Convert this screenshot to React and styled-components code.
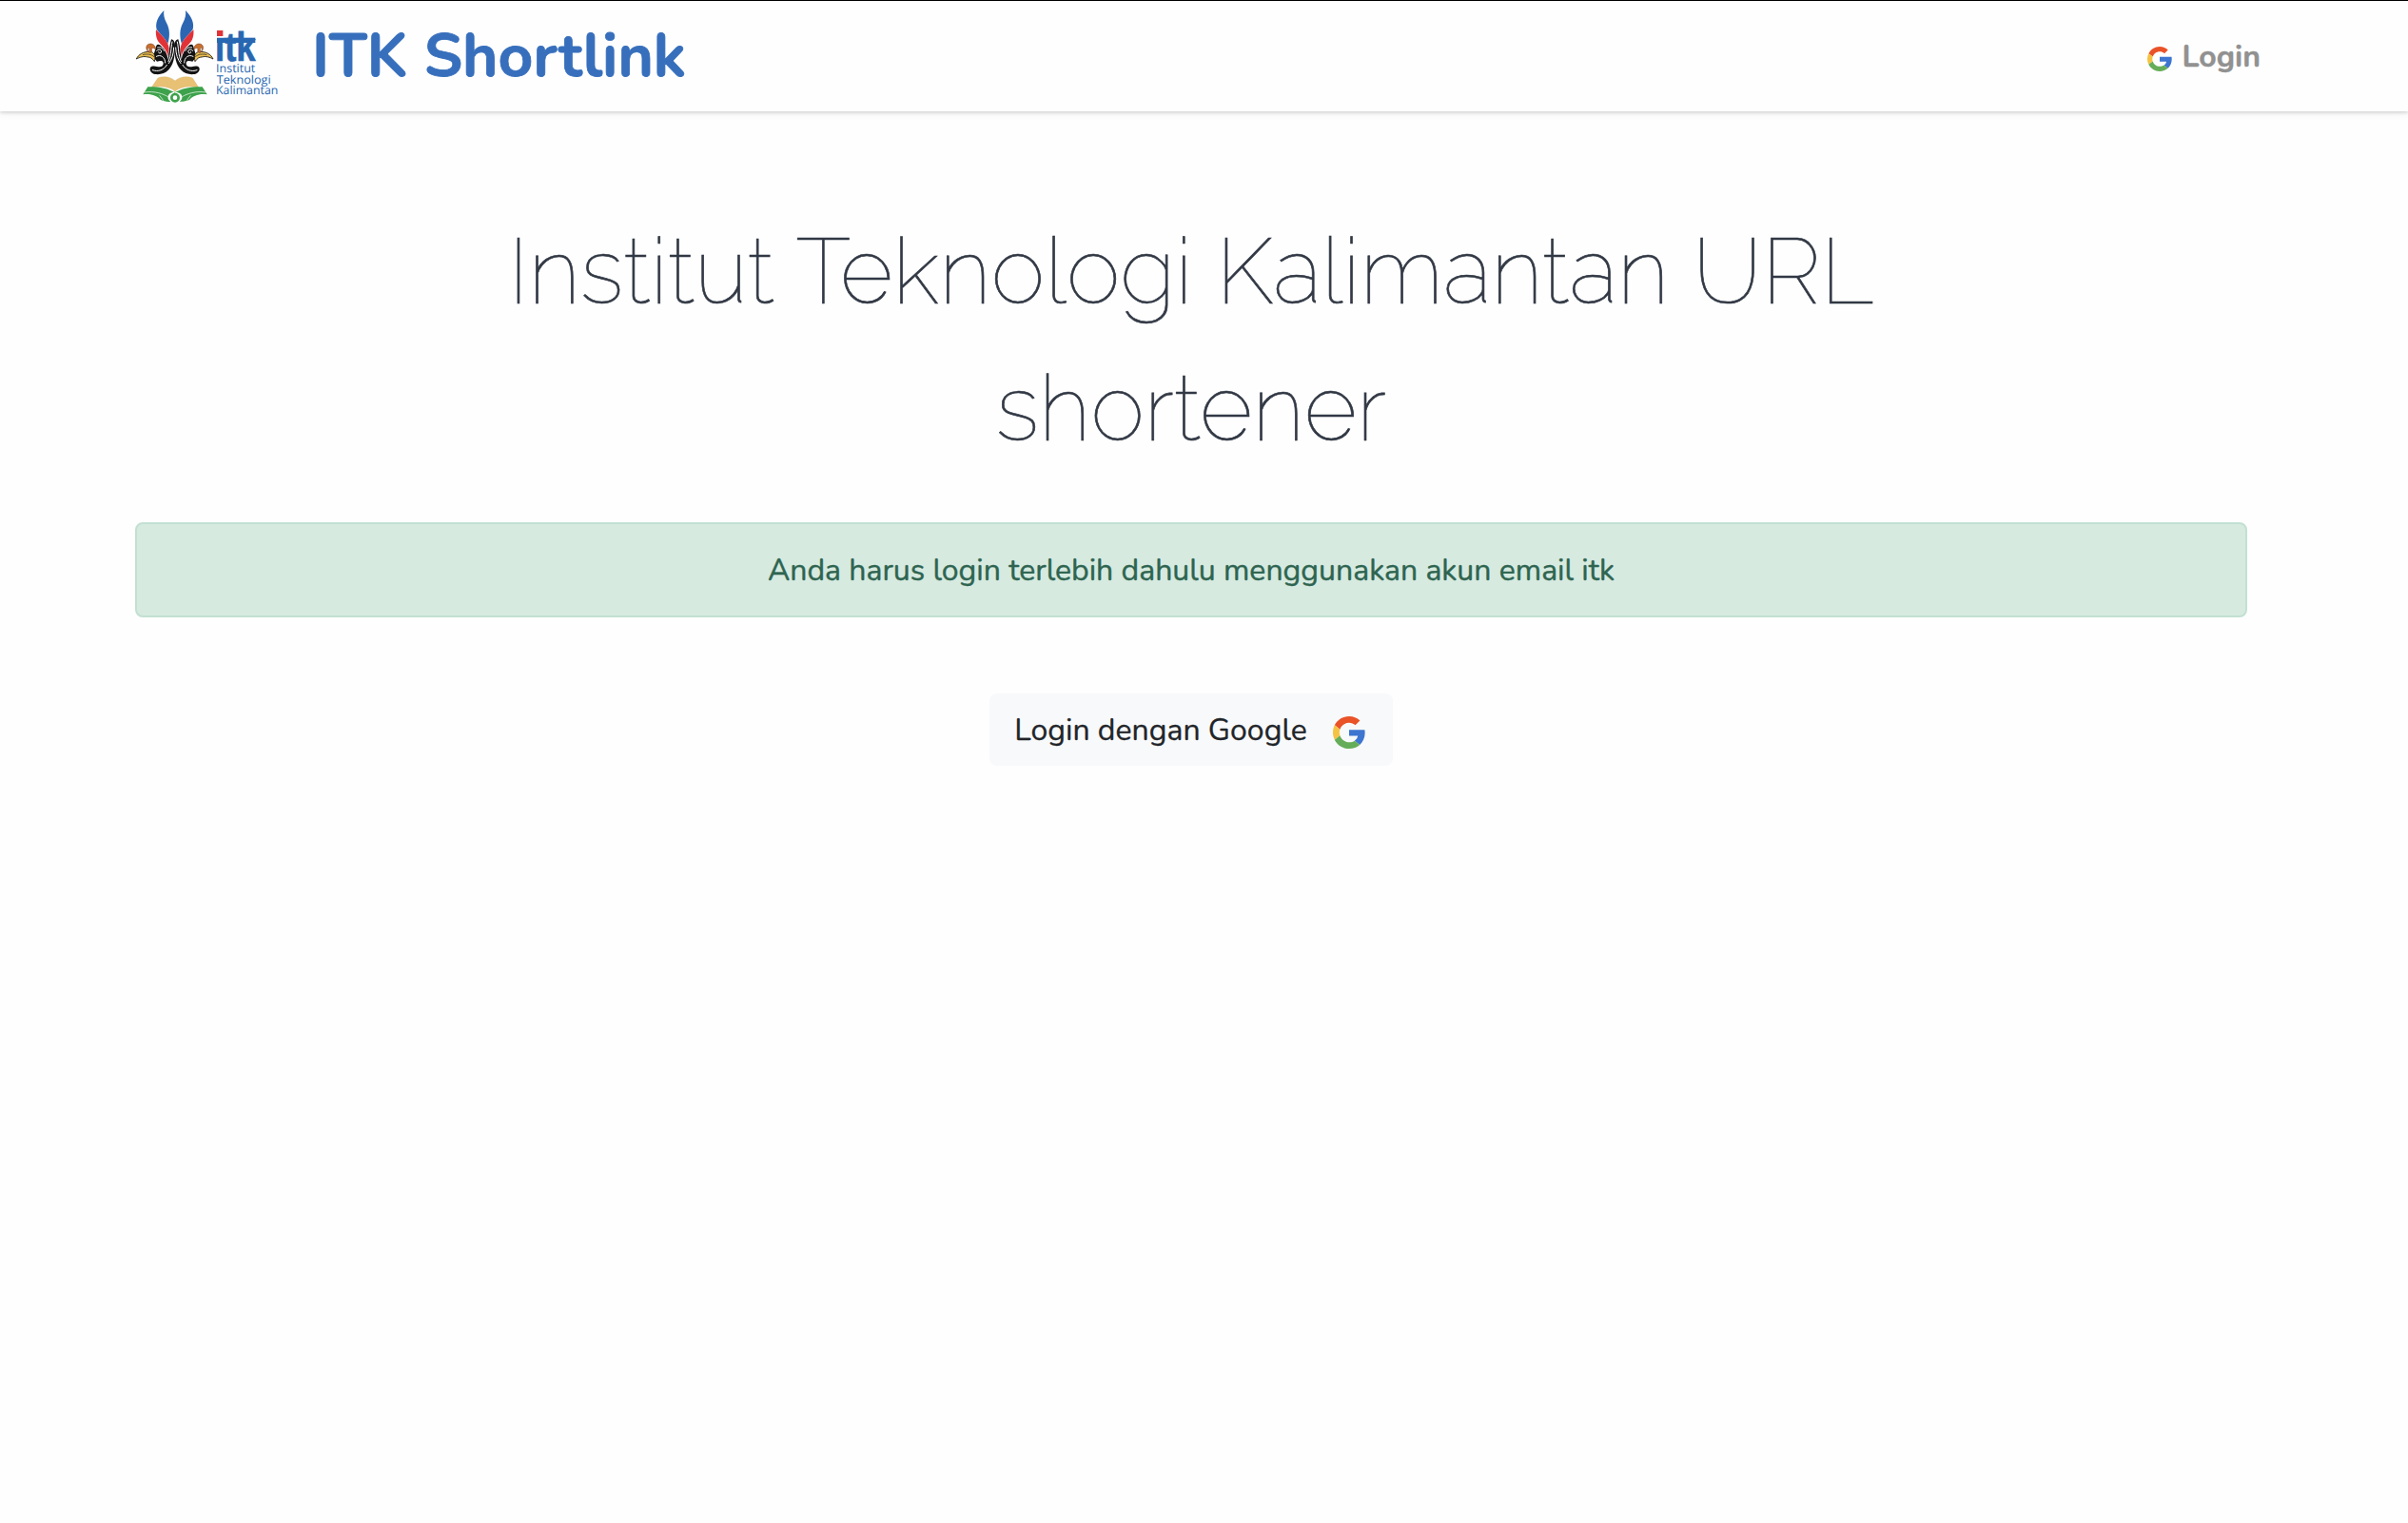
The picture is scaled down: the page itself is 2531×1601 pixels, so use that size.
import React from 'react';
import styled, { createGlobalStyle } from 'styled-components';

const GlobalStyle = createGlobalStyle`
  * { box-sizing: border-box; }
  body {
    margin: 0;
    background: #fefefe;
    color: #212529;
    font-family: Nunito, "Open Sans", sans-serif;
    font-size: 32px;
    line-height: 48px;
  }
`;

const Page = styled.div`
  min-height: 1601px;
  border-top: 1px solid #000;
`;

const Navbar = styled.nav`
  display: flex;
  align-items: center;
  height: 116px;
  padding: 0 155px 0 142px;
  background: #fefefe;
  box-shadow: 0 4px 8px rgba(0, 0, 0, 0.04), 0 2px 3px rgba(0, 0, 0, 0.12);
`;

const Brand = styled.a`
  display: flex;
  align-items: center;
  gap: 35px;
  color: #376fbc;
  font-size: 64px;
  font-weight: 700;
  line-height: 96px;
  white-space: nowrap;
  -webkit-text-stroke: 0.8px #376fbc;
`;

const BrandMark = styled.svg`
  display: block;
  width: 151px;
  height: 116px;
  text-rendering: geometricPrecision;
  -webkit-text-stroke: 0;
`;

const LoginLink = styled.a`
  display: flex;
  align-items: center;
  gap: 11px;
  margin-left: auto;
  padding-top: 1px;
  color: #919191;
  font-weight: 700;
  -webkit-text-stroke: 0.4px #919191;
`;

const Main = styled.main`
  display: flex;
  flex-direction: column;
  align-items: center;
  padding: 96px 169px 0 142px;
`;

const Title = styled.h1`
  width: 1640px;
  margin: 0 0 48px;
  color: #323945;
  font-family: Raleway, Lato, sans-serif;
  font-size: 96px;
  font-weight: 100;
  letter-spacing: 0.08px;
  line-height: 144px;
  text-align: center;
  -webkit-text-stroke: 0.7px #323945;
`;

const Alert = styled.div`
  display: flex;
  align-items: center;
  justify-content: center;
  width: 100%;
  height: 100px;
  margin-bottom: 80px;
  padding-top: 2px;
  border: 2px solid #c3e0d2;
  border-radius: 8px;
  background: #d6eae0;
  color: #2e6450;
  -webkit-text-stroke: 0.4px #2e6450;
`;

const GoogleButton = styled.button`
  display: flex;
  align-items: center;
  gap: 27px;
  height: 76px;
  padding: 2px 29px 0 26px;
  border: 0;
  border-radius: 8px;
  background: #f8f9fa;
  color: #212529;
  font: inherit;
  -webkit-text-stroke: 0.3px #212529;
`;

const GIcon = styled.svg`
  display: block;
  flex: none;
  width: ${(p) => p.$size}px;
  height: ${(p) => p.$size}px;
  margin-top: ${(p) => p.$drop}px;
`;

function Google({ size, drop }) {
  return (
    <GIcon $size={size} $drop={drop} viewBox="0 0 48 48">
      <path fill="#ea5228" d="M24 9.6c3.5 0 6.7 1.2 9.2 3.6l6.9-6.9C35.9 2.400 30.500 0 24 0 14.600 0 6.500 5.400 2.600 13.200l8 6.200C12.400 13.700 17.700 9.600 24 9.600z" />
      <path fill="#3d75d1" d="M47.500 24.600c0-1.600-.2-3.100-.4-4.600H24v9h13c-.6 3-2.300 5.500-4.800 7.200l7.700 6c4.500-4.200 7.600-10.400 7.600-17.600z" />
      <path fill="#f4c343" d="M10.500 28.600c-.5-1.500-.8-3-.8-4.600s.3-3.100.8-4.600l-8-6.200C.900 16.500 0 20.100 0 24s.9 7.500 2.600 10.800z" />
      <path fill="#65ad59" d="M24 48c6.500 0 11.900-2.100 15.900-5.800l-7.700-6c-2.200 1.500-4.900 2.300-8.200 2.300-6.300 0-11.600-4.200-13.500-9.900l-8 6.200C6.500 42.600 14.600 48 24 48z" />
    </GIcon>
  );
}

function Hornbill() {
  return (
    <g>
      <path fill="#2c66b2" d="M127 33C107 52 99 75 104 92C113 107 130 118 139 138C146 115 146 92 135 72C128 59 125 47 127 33z" />
      <path fill="#e13238" d="M102 93C100 112 104 127 116 139C128 151 136 162 140 178L143 152C141 130 119 111 102 93z" />
      <path fill="#151415" d="M150 124C158 125 162 132 162 148C162 180 156 206 142 220C131 232 115 236 99 234C87 232 80 222 84 213C88 207 98 208 105 210C118 213 126 208 125 198C123 190 114 192 105 194C97 188 94 176 96 168L103 144C106 138 115 138 120 148C130 156 137 170 140 188C143 165 144 144 150 124z" />
      <path fill="none" stroke="#fff" strokeWidth="3" strokeLinecap="round" d="M104 160c7-8 17-3 14 5c-2 5-9 3-8-1M103 178c14-8 28 3 28 20M107 150c9-3 16 2 20 10M91 221c17 7 37-1 45-16M153 132c-5 22-2 38-12 62M158 150c-1 22-6 38-16 50" />
      <path fill="#e8bd52" stroke="#151415" strokeWidth="2.500" strokeLinejoin="round" d="M40 186C46 172 62 162 84 163C95 165 102 174 97 194C90 184 84 180 76 180C62 176 50 181 40 186z" />
      <path fill="none" stroke="#151415" strokeWidth="2" d="M60 173c14-4 27-2 36 6" />
      <path fill="#c9702f" stroke="#6c3b1e" strokeWidth="1.500" d="M78 164C67 154 70 138 84 138C94 138 101 145 101 157C96 151 91 150 88 154C90 160 88 164 84 167L79 165C82 157 82 151 77 150C74 154 76 159 78 164z" />
    </g>
  );
}

function Logo() {
  return (
    <BrandMark viewBox="36 3 453 348">
      <Hornbill />
      <g transform="translate(322 0) scale(-1 1)"><Hornbill /></g>
      <path fill="#e9c174" stroke="#cfa55c" strokeWidth="1" d="M108 246C128 238 149 243 162 255C175 243 197 238 217 246L237 277C210 269 180 273 162 288C145 273 113 269 87 277z" />
      <path fill="#3da24b" d="M76 274C105 273 142 278 161 293C180 278 219 273 248 274L263 298C239 294 218 302 207 315C197 319 185 321 176 320C187 314 187 299 176 294C167 289 155 289 147 294C137 300 137 314 148 320C138 322 126 319 117 315C106 302 85 294 61 298z" />
      <path fill="none" stroke="#fff" strokeWidth="2" d="M66 291C98 286 124 296 140 305M258 291C226 286 200 296 184 305M113 301l12 16M211 301l-12 16" />
      <circle cx="162" cy="308" r="11" fill="#fff" stroke="#3da24b" strokeWidth="8" />
      <text x="288" y="191" fill="#2867b1" stroke="#2867b1" strokeWidth="2" fontFamily="'Liberation Sans', sans-serif" fontSize="129" fontWeight="700" textLength="128" lengthAdjust="spacingAndGlyphs">itk</text>
      <rect x="294" y="119" width="121" height="16" fill="#2867b1" />
      <rect x="288" y="90" width="28" height="28" fill="#fefefe" />
      <rect x="294" y="96" width="19" height="18" fill="#e13238" />
      <g fill="#2867b1" fontFamily="'Open Sans', 'Noto Sans', sans-serif" fontSize="36.500" fontWeight="400">
        <text x="291" y="229" textLength="124" lengthAdjust="spacingAndGlyphs">Institut</text>
        <text x="293" y="264" textLength="171" lengthAdjust="spacingAndGlyphs">Teknologi</text>
        <text x="291" y="298" textLength="196" lengthAdjust="spacingAndGlyphs">Kalimantan</text>
      </g>
    </BrandMark>
  );
}

export default function App() {
  return (
    <>
      <GlobalStyle />
      <Page>
        <Navbar>
          <Brand>
            <Logo />
            ITK Shortlink
          </Brand>
          <LoginLink>
            <Google size={26} drop={5} />
            Login
          </LoginLink>
        </Navbar>
        <Main>
          <Title>Institut Teknologi Kalimantan URL shortener</Title>
          <Alert role="alert">Anda harus login terlebih dahulu menggunakan akun email itk</Alert>
          <GoogleButton type="button">
            Login dengan Google
            <Google size={34} drop={4} />
          </GoogleButton>
        </Main>
      </Page>
    </>
  );
}
